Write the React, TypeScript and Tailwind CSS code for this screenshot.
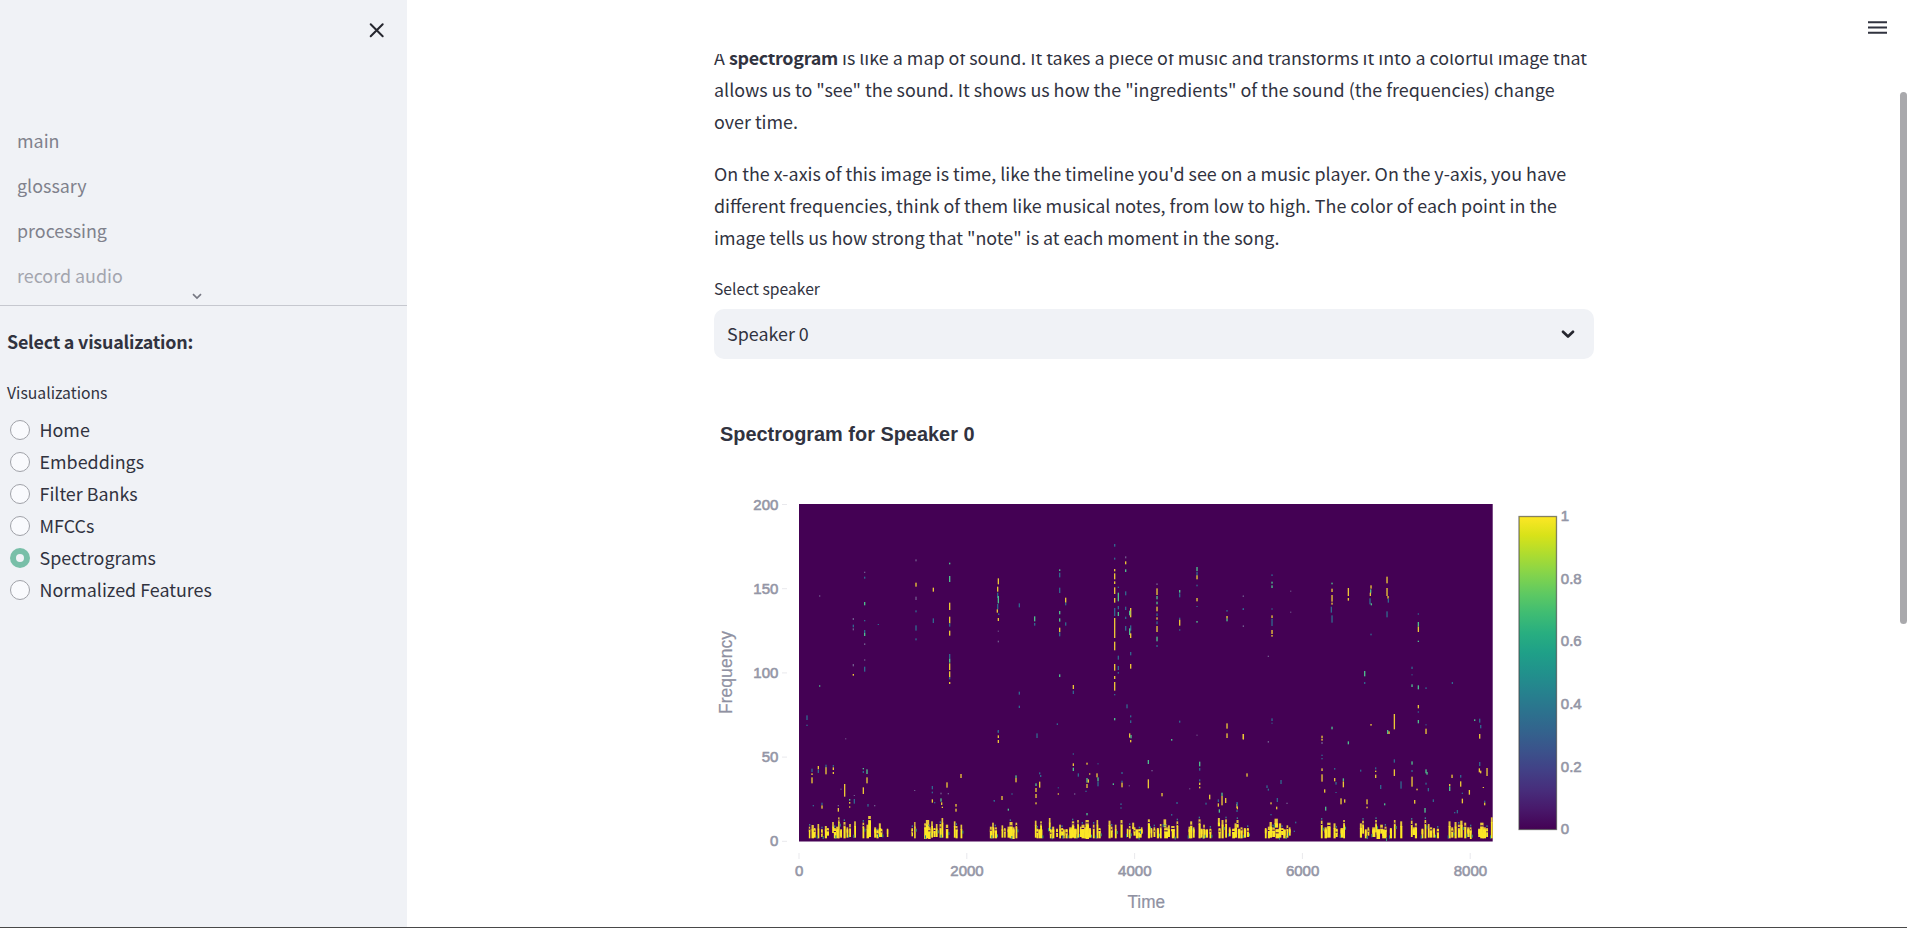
import React from "react";

const Y = "#ecc836";
const T = "#4fc08d";
const B = "#31688e";
const P = "#6f5a8c";
const COLORS: Record<string, string> = { y: Y, t: T, b: B, p: P };

// Each dash: x, y, height, colour key. Units are thirds of a pixel.
const EARLY =
  "494 275 4 p|494 290 6 b|494 366 10 t|494 420 4 b|494 450 9 b|494 459 9 t|494 490 5 p|494 538 4 p|494 560 15 b|460 414 6 p|460 434 8 b|460 445 6 p|460 552 7 p|460 582 5 y|359 346 4 p|359 616 4 t|321 706 14 b|321 734 4 b|437 775 3 p|" +
  "648 238 6 p|648 308 12 y|648 350 10 p|648 391 6 b|648 436 16 b|648 475 6 b|700 323 12 y|700 415 14 b|749 248 5 t|749 288 18 t|749 368 22 y|749 410 20 y|749 430 10 b|749 452 15 y|749 522 14 b|749 536 12 t|749 550 20 y|749 574 18 y|749 592 6 b|749 606 6 y|535 432 3 b|" +
  "895 295 18 y|893 320 15 y|893 338 16 b|895 348 22 t|893 372 16 b|892 388 10 y|896 400 5 b|895 414 9 y|895 452 3 p|895 482 5 p|895 752 6 b|895 766 8 y|895 780 9 y|" +
  "336 866 10 b|336 880 5 y|336 892 18 y|355 858 10 y|355 869 10 b|378 854 10 b|378 862 21 y|400 855 5 b|400 862 8 y|400 876 6 y|434 912 38 y|423 926 3 p|490 864 4 t|490 873 6 b|501 868 14 t|501 892 18 y|490 922 20 y|463 945 3 p|449 957 5 t|449 966 5 y|449 979 4 y|463 957 14 b|340 975 4 b|366 968 7 b|366 976 10 y|415 975 4 p|415 984 11 y|504 972 8 b|524 975 4 p|644 930 3 p|" +
  "697 918 10 b|697 935 5 b|697 958 10 y|704 966 4 b|723 938 5 p|723 955 10 t|725 967 8 y|727 980 4 y|741 907 16 y|745 939 4 p|783 882 12 y|768 972 8 y|768 986 9 y|883 960 5 b";

const MIDDLE =
  "118 250 12 b|118 515 9 b|118 557 7 b|164 289 15 t|164 309 8 b|239 148 5 t|239 158 14 b|239 203 16 b|239 273 10 t|239 295 10 t|239 323 13 y|239 337 12 b|239 463 8 t|257 233 15 y|257 248 8 b|257 307 10 b|280 495 12 y|280 512 10 b|232 610 5 b|171 640 14 b|280 700 4 b|" +
  "404 72 8 b|404 113 6 b|404 147 7 y|404 160 18 y|404 184 8 y|404 202 20 y|404 234 14 y|404 264 24 b|404 294 60 y|404 365 26 y|404 432 20 y|404 468 9 y|404 486 26 y|404 522 4 b|404 594 7 t|415 200 4 b|415 218 26 t|415 258 10 b|415 276 12 t|415 407 12 b|415 438 12 b|415 456 5 b|437 109 6 p|437 124 9 y|437 148 8 t|437 214 12 b|437 260 10 b|437 290 7 b|437 318 14 b|" +
  "452 264 28 y|449 272 14 t|452 316 16 b|449 325 20 t|452 340 14 y|452 396 10 b|452 432 14 y|441 553 12 b|452 586 6 b|452 601 8 b|449 640 13 y|453 645 10 t|452 660 7 y|531 190 5 p|531 205 20 y|531 228 10 t|531 245 8 t|531 260 14 y|531 280 8 b|531 292 7 y|531 304 9 b|531 318 18 y|531 350 14 t|531 375 6 b|" +
  "599 210 8 t|599 220 12 b|599 293 6 b|599 299 18 y|599 328 4 b|599 602 6 b|651 141 12 t|651 155 12 b|651 166 12 y|651 194 5 b|651 234 10 y|651 258 3 b|651 303 5 t|651 644 3 p|575 657 5 t|741 270 5 b|741 288 8 y|741 296 8 t|741 610 16 y|741 640 14 y|790 227 3 p|790 265 5 b|790 316 5 p|790 642 16 y|" +
  "55 630 8 b|280 730 8 y|280 743 10 t|108 766 8 t|108 774 13 y|179 757 6 b|182 765 6 b|179 785 18 y|168 790 8 t|168 804 12 y|168 822 12 y|168 847 6 y|66 828 12 y|43 840 4 b|96 820 4 b|85 866 6 t|235 820 4 y|235 802 3 b|295 760 10 b|321 728 6 y|329 760 4 y|321 774 14 t|325 778 10 y|321 792 12 y|351 760 12 y|354 772 12 t|354 785 14 b|354 730 3 b|318 812 4 b|321 879 7 t|284 820 4 p|" +
  "400 790 5 t|426 756 6 b|426 782 6 b|426 788 14 y|448 796 3 p|423 850 5 b|423 862 4 b|505 720 12 t|505 778 27 y|516 750 4 p|546 819 10 y|591 846 6 b|575 882 5 b|659 725 14 t|659 744 8 b|659 778 6 b|659 788 7 y|659 800 5 y|629 805 3 p|689 824 14 y|678 848 6 b|715 838 8 b|715 850 10 y|718 868 10 t|726 818 10 t|726 828 28 y|737 834 15 y|771 846 6 b|771 852 12 y|771 870 6 b";

const LATE =
  "40 642 16 y|40 227 3 p|40 265 5 b|126 163 5 b|126 185 6 t|126 196 8 t|126 265 4 b|126 286 8 y|126 296 22 b|126 330 12 y|126 345 5 y|182 212 3 p|182 275 3 p|115 407 4 p|126 595 8 b|126 608 3 b|115 663 5 p|306 188 5 t|306 206 10 y|306 225 20 y|306 248 6 y|304 260 18 b|306 286 22 b|355 204 24 y|355 234 8 y|423 196 10 y|422 208 12 t|421 218 10 y|420 235 18 b|424 250 6 t|471 170 20 y|471 204 24 y|474 228 8 y|475 236 12 b|471 274 18 b|423 341 5 b|" +
  "565 280 4 b|565 306 14 t|565 320 16 y|565 362 4 t|404 453 16 t|404 486 6 b|546 440 7 b|546 463 3 b|546 493 8 t|565 496 12 t|588 502 5 b|667 486 6 b|565 555 10 y|565 574 4 b|565 600 10 t|588 613 3 b|588 626 16 y|493 582 46 y|473 630 12 t|477 634 8 y|423 612 5 y|306 620 8 t|355 664 9 t|276 647 8 y|276 657 5 y|276 666 6 p|276 704 4 b|276 714 4 b|276 745 8 y|276 763 22 y|284 808 10 y|314 744 5 b|314 774 10 y|318 786 8 b|318 816 3 b|340 775 8 t|340 784 18 y|333 835 18 y|344 838 10 y|287 860 12 t|" +
  "392 749 6 b|437 742 6 b|437 752 4 y|437 764 10 y|411 838 15 y|411 860 5 y|452 795 12 b|464 850 6 t|493 718 10 b|493 748 20 y|513 784 22 b|546 724 10 t|546 750 6 b|546 770 30 y|588 748 12 t|591 756 8 t|588 788 6 b|595 804 10 b|561 806 5 y|554 840 11 y|610 838 8 b|585 864 14 t|659 792 6 y|659 799 14 t|666 764 10 y|692 765 8 b|692 784 16 y|697 818 4 b|697 836 14 y|718 810 14 y|682 870 10 b|674 876 4 b|734 598 5 t|749 596 12 b|752 615 10 b|749 642 14 y|749 726 12 b|748 745 12 y|752 752 8 y|771 744 24 y|760 801 3 y|764 842 6 b|764 848 8 y|51 760 10 y|22 847 12 b|22 860 8 y|111 796 8 b|115 806 6 b|153 780 12 b|123 847 6 y|142 834 12 b|140 860 8 y|123 882 4 b|171 848 4 p|197 905 5 b|193 932 4 b";

// Low-frequency activity: x, width, top, bottom (thirds of a pixel).
const BAND: number[][] = [
  [30, 3, 260, 294], [38, 6, 255, 294], [45, 4, 264, 292], [56, 4, 252, 294], [67, 3, 268, 290], [78, 5, 258, 294], [84, 5, 264, 286],
  [100, 4, 246, 278], [105, 5, 264, 294], [112, 6, 260, 294], [118, 3, 232, 294], [124, 4, 272, 292], [134, 5, 246, 294], [143, 4, 262, 292],
  [151, 4, 252, 290], [166, 4, 244, 292], [191, 4, 248, 294], [203, 6, 254, 294], [208, 7, 228, 290], [226, 5, 262, 292], [233, 5, 274, 294], [240, 5, 250, 290], [246, 3, 266, 290],
  [264, 3, 266, 290], [338, 3, 264, 288], [346, 3, 246, 294], [376, 6, 250, 296], [381, 9, 240, 294], [388, 6, 262, 296], [397, 4, 244, 292], [404, 5, 264, 290], [411, 4, 252, 290], [422, 5, 252, 292], [428, 4, 234, 292], [441, 6, 254, 294],
  [465, 4, 244, 292], [470, 5, 258, 294], [485, 4, 254, 294], [573, 5, 260, 294], [580, 4, 248, 294], [587, 6, 262, 294], [608, 4, 256, 292], [616, 3, 264, 292], [626, 8, 260, 292], [632, 8, 246, 294], [640, 6, 262, 296], [650, 4, 248, 294],
  [708, 4, 242, 292], [713, 4, 266, 294], [719, 10, 270, 294], [724, 4, 244, 278], [750, 4, 234, 272], [753, 4, 270, 294], [760, 5, 260, 294], [772, 4, 266, 290], [781, 4, 254, 294], [787, 5, 264, 286], [793, 3, 272, 294], [800, 5, 268, 294],
  [811, 8, 262, 294], [819, 6, 244, 292], [825, 7, 266, 294], [835, 4, 240, 292], [843, 5, 260, 290], [848, 8, 254, 294], [856, 6, 262, 294], [860, 9, 240, 296], [869, 6, 264, 292], [882, 4, 254, 294], [893, 4, 240, 294], [899, 5, 264, 294],
  [929, 5, 242, 294], [936, 4, 260, 292], [948, 4, 254, 294], [965, 5, 240, 292], [984, 3, 266, 290], [990, 4, 258, 294], [1000, 5, 248, 266], [1004, 5, 262, 286], [1011, 7, 272, 294], [1019, 8, 268, 292], [1026, 4, 262, 280],
  [1047, 5, 238, 294], [1055, 4, 264, 292], [1064, 4, 262, 290], [1074, 5, 264, 294], [1083, 4, 252, 294], [1094, 7, 238, 260], [1096, 10, 262, 294], [1107, 5, 256, 290], [1117, 9, 258, 272], [1119, 7, 274, 294], [1133, 4, 244, 294],
  [1169, 5, 260, 294], [1174, 5, 244, 294], [1182, 4, 262, 292], [1199, 5, 238, 294], [1205, 5, 266, 292], [1213, 4, 254, 294], [1220, 6, 270, 292], [1232, 4, 266, 294], [1257, 5, 234, 258], [1259, 5, 264, 294], [1268, 5, 240, 294], [1279, 4, 238, 292], [1290, 4, 262, 288],
  [1300, 7, 266, 294], [1307, 6, 250, 292], [1313, 5, 240, 262], [1317, 6, 266, 294], [1325, 5, 262, 294], [1335, 5, 264, 292], [1344, 5, 264, 290], [1398, 4, 264, 294], [1407, 5, 260, 294], [1412, 6, 246, 292], [1420, 7, 262, 290], [1427, 9, 236, 262], [1430, 9, 268, 294], [1440, 6, 250, 292], [1447, 6, 264, 284], [1453, 6, 270, 294], [1463, 4, 256, 292], [1470, 4, 262, 286],
  [1566, 4, 242, 294], [1577, 6, 262, 294], [1585, 9, 248, 292], [1604, 5, 250, 294], [1610, 5, 266, 290], [1625, 8, 264, 292], [1633, 4, 240, 294], [1683, 5, 250, 292], [1690, 4, 242, 280], [1698, 4, 272, 294], [1706, 4, 262, 286], [1720, 8, 262, 290], [1729, 4, 240, 276], [1733, 9, 268, 296], [1744, 7, 254, 280], [1750, 10, 272, 294], [1757, 5, 260, 292],
  [1773, 5, 264, 294], [1785, 4, 240, 294], [1804, 5, 244, 294], [1836, 4, 242, 290], [1841, 8, 262, 284], [1848, 5, 250, 294], [1868, 4, 266, 294], [1877, 4, 240, 294], [1887, 4, 252, 292], [1893, 6, 262, 292], [1903, 4, 264, 292], [1914, 5, 266, 294], [1949, 5, 244, 294], [1957, 5, 262, 292], [1967, 5, 246, 294], [1977, 5, 254, 292], [1984, 6, 242, 292], [1996, 5, 248, 294], [2005, 6, 262, 290], [2013, 4, 262, 296],
  [2038, 8, 266, 290], [2044, 9, 248, 294], [2051, 9, 262, 294], [2062, 4, 264, 290], [2076, 6, 232, 294],
];

function Dashes({ data, dx, dy }: { data: string; dx: number; dy: number }) {
  return (
    <g transform={`translate(${dx} ${dy})`}>
      {data.split("|").map((item, i) => {
        const [x, y, h, c] = item.split(" ");
        return <rect key={i} x={+x - 2} y={+y} width={4} height={+h} fill={COLORS[c]} />;
      })}
    </g>
  );
}

function Band() {
  return (
    <g transform="translate(0 708)">
      {BAND.map(([x, w, top, bottom], i) => (
        <g key={i}>
          <rect x={x - 0.5} y={top} width={w + 1} height={16} fill="#e6c53a" />
          <rect x={x - 0.5} y={Math.min(top + 14, 268)} width={w + 1.5} height={bottom - Math.min(top + 14, 268) + 1} fill="#fde725" />
          {i % 2 === 0 && <rect x={x - 0.5} y={top + 6 + (i % 5)} width={w + 1} height={3} fill="#440154" />}
          {i % 3 === 1 && <rect x={x + w + 1} y={top + 16 + (i % 7)} width={3} height={9} fill="#35a77c" />}
          {i % 4 === 0 && <rect x={x} y={top - 8} width={4} height={5} fill="#3b7d8c" />}
          {i % 6 === 3 && <rect x={x - 3} y={bottom - 8} width={3} height={10} fill="#2a8b86" />}
        </g>
      ))}
    </g>
  );
}

function Chart() {
  const tick = { fill: "#9496a6", stroke: "#9496a6", strokeWidth: 0.6, fontSize: 15 };
  return (
    <svg width="880" height="507" viewBox="714 420 880 507" fontFamily="'Liberation Sans', sans-serif" className="block">
      <defs>
        <linearGradient id="viridis" x1="0" y1="1" x2="0" y2="0">
          <stop offset="0" stopColor="#440154" />
          <stop offset="0.063" stopColor="#48186a" />
          <stop offset="0.125" stopColor="#472d7b" />
          <stop offset="0.188" stopColor="#424086" />
          <stop offset="0.25" stopColor="#3b528b" />
          <stop offset="0.314" stopColor="#33638d" />
          <stop offset="0.376" stopColor="#2c728e" />
          <stop offset="0.44" stopColor="#26828e" />
          <stop offset="0.5" stopColor="#21918c" />
          <stop offset="0.565" stopColor="#1fa088" />
          <stop offset="0.627" stopColor="#28ae80" />
          <stop offset="0.69" stopColor="#3fbc73" />
          <stop offset="0.753" stopColor="#5ec962" />
          <stop offset="0.816" stopColor="#84d44b" />
          <stop offset="0.878" stopColor="#addc30" />
          <stop offset="0.94" stopColor="#d8e219" />
          <stop offset="1" stopColor="#fde725" />
        </linearGradient>
      </defs>
      <text x="720" y="441" fontSize="20" fontWeight="700" fill="#31333f" textLength="254.5" lengthAdjust="spacingAndGlyphs">
        Spectrogram for Speaker 0
      </text>
      <rect x="799" y="504" width="693.7" height="337.5" fill="#440154" />
      <svg x="799" y="504" width="693.7" height="337.5" viewBox="0 0 2081 1012.5" preserveAspectRatio="none">
        <Dashes data={EARLY} dx={-297} dy={-72} />
        <Dashes data={MIDDLE} dx={543} dy={48} />
        <Dashes data={LATE} dx={1293} dy={48} />
        <Band />
      </svg>
      {[200, 150, 100, 50, 0].map((v, i) => (
        <g key={v}>
          <rect x="782" y={504 + i * 84.2} width="5" height="1" fill="#e9e9ed" />
          <text x="778.4" y={509.9 + i * 84.1} textAnchor="end" {...tick}>{v}</text>
        </g>
      ))}
      {[0, 2000, 4000, 6000, 8000].map((v, i) => (
        <g key={v}>
          <rect x={798.5 + i * 167.8} y="853" width="1" height="6" fill="#e9e9ed" />
          <text x={799.2 + i * 167.8} y="876.3" textAnchor="middle" {...tick}>{v}</text>
        </g>
      ))}
      <text x="1127.5" y="907.7" fontSize="17.5" fill="#8f91a2" stroke="#8f91a2" strokeWidth="0.2" textLength="37.5" lengthAdjust="spacingAndGlyphs">Time</text>
      <text transform="translate(731.7 714) rotate(-90)" fontSize="17.5" fill="#8f91a2" stroke="#8f91a2" strokeWidth="0.2" textLength="83" lengthAdjust="spacingAndGlyphs">Frequency</text>
      <rect x="1519" y="516.5" width="37.5" height="313" fill="url(#viridis)" stroke="#444444" strokeOpacity="0.65" strokeWidth="1.3" />
      {["1", "0.8", "0.6", "0.4", "0.2", "0"].map((v, i) => (
        <text key={v} x="1560.8" y={521.2 + i * 62.6} {...tick}>{v}</text>
      ))}
    </svg>
  );
}

const pages = ["main", "glossary", "processing", "record audio"];
const options = ["Home", "Embeddings", "Filter Banks", "MFCCs", "Spectrograms", "Normalized Features"];

function Sidebar() {
  return (
    <aside className="flex w-[407px] shrink-0 flex-col bg-[#f0f2f6]">
      <div className="flex h-[118px] justify-end pt-[22px] pr-[22px]">
        <svg width="16" height="16" viewBox="0 0 16 16" fill="none" stroke="#26272f" strokeWidth="2" strokeLinecap="round">
          <path d="M1.7 2.2 13.7 14.2M13.7 2.2 1.7 14.2" />
        </svg>
      </div>
      <nav className="flex h-[188px] flex-col border-b border-[#c6c8cf] pl-[17px]">
        {pages.map((p) => (
          <a key={p} className={p === "record audio" ? "h-[45px] pt-[6px] leading-[32px] text-[#a3a5ae]" : "h-[45px] pt-[6px] leading-[32px] text-[#7f818c]"}>
            {p}
          </a>
        ))}
        <svg width="10" height="7" viewBox="0 0 10 7" fill="none" stroke="#777984" strokeWidth="1.7" className="-mt-[5px] ml-[175px]">
          <path d="M1 1.2 5 5l4-3.8" />
        </svg>
      </nav>
      <div className="flex flex-col pl-[7px]">
        <p className="mt-[19px] leading-[32px] font-bold tracking-[-0.22px] text-[#31333f]">Select a visualization:</p>
        <p className="mt-[23px] h-[26px] text-[15.75px] leading-[26px]">Visualizations</p>
        <div className="mt-[8px] flex flex-col">
          {options.map((o) => (
            <label key={o} className="flex h-[32px] items-center gap-[9.5px] pl-[3px]">
              {o === "Spectrograms" ? (
                <span className="flex size-[20px] items-center justify-center rounded-full bg-[#78bfa8]">
                  <span className="size-[7.5px] rounded-full bg-[#f0f2f6]" />
                </span>
              ) : (
                <span className="size-[20px] rounded-full border border-[#a0a2a8] border-r-[1.5px] bg-[#f9fafd]" />
              )}
              <span className="h-[32px] leading-[30px]">{o}</span>
            </label>
          ))}
        </div>
      </div>
    </aside>
  );
}

export default function App() {
  return (
    <div className="relative flex h-[928px] w-full overflow-hidden bg-white text-[17.9px] text-[#31333f] [font-family:'Noto_Sans_CJK_SC',sans-serif]">
      <Sidebar />
      <main className="flex flex-1 flex-col">
        <header className="flex h-[54px] shrink-0 justify-end pt-[21px] pr-[20px]">
          <svg width="19" height="13" viewBox="0 0 19 13" fill="#31333f">
            <path d="M0 .3h19v2H0zM0 5.5h19v2H0zM0 10.8h19v2H0z" />
          </svg>
        </header>
        <section className="flex-1 overflow-hidden pl-[307px]">
          <div className="-mt-[13px] flex w-[880px] flex-col">
            <p className="leading-[32px]">
              A <b className="tracking-[-0.27px]">spectrogram</b> is like a map of sound. It takes a piece of music and transforms it into a colorful image that allows us to "see" the sound. It shows us how the "ingredients" of the sound (the frequencies) change over time.
            </p>
            <p className="mt-[20px] leading-[32px]">
              On the x-axis of this image is time, like the timeline you'd see on a music player. On the y-axis, you have different frequencies, think of them like musical notes, from low to high. The color of each point in the image tells us how strong that "note" is at each moment in the song.
            </p>
            <p className="mt-[23px] h-[26px] text-[15.7px] leading-[26px]">Select speaker</p>
            <div className="mt-[7px] flex h-[50px] items-center justify-between rounded-[10px] bg-[#f0f2f6] pr-[19px] pl-[13px]">
              <span className="h-[32px] leading-[30px]">Speaker 0</span>
              <svg width="14" height="9" viewBox="0 0 14 9" fill="none" stroke="#26272f" strokeWidth="2.7" strokeLinecap="round" strokeLinejoin="round">
                <path d="M2 1.8 7 6.5l5-4.7" />
              </svg>
            </div>
            <div className="mt-[61px]">
              <Chart />
            </div>
          </div>
        </section>
      </main>
      <div className="absolute top-[92px] right-0 h-[532px] w-[7px] rounded-full bg-[#a9a9ac]" />
      <div className="absolute bottom-0 left-0 h-px w-full bg-[#494949]" />
    </div>
  );
}
